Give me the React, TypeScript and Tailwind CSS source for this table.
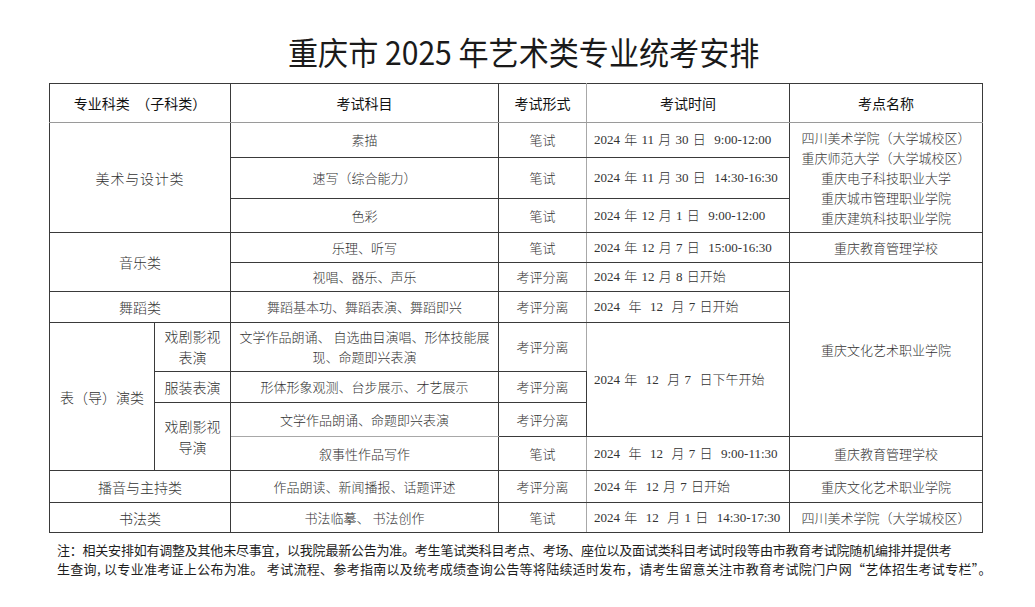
export default function App() {
  const td = "border border-[#3a3a3a] p-0 text-center align-middle leading-[20px] font-light";
  const tdD = "border border-[#3a3a3a] border-r-[#a8a8a8] p-0 text-center align-middle leading-[20px] font-light";
  const tdE =
    "border border-[#3a3a3a] pl-[7px] text-left align-middle whitespace-pre text-[13px] font-light [word-spacing:1px] font-['Liberation_Serif','Noto_Sans_CJK_SC',serif]";
  const th =
    "border border-[#3a3a3a] border-b-[#9a9a9a] p-0 text-center align-middle text-[14px] font-normal text-[#111]";
  const thD =
    "border border-[#3a3a3a] border-b-[#9a9a9a] border-r-[#a8a8a8] p-0 text-center align-middle text-[14px] font-normal text-[#111]";
  const cat = "text-[14px]";

  return (
    <div className="w-[1035px] h-[607px] bg-white font-['Noto_Sans_CJK_SC',sans-serif] text-[#333] pt-[30px]">
      <div className="flex justify-center pl-[13px] h-[42px]">
        <div className="text-[32px] leading-[42px] font-normal text-[#1a1a1a] scale-x-[0.94] whitespace-nowrap">
          重庆市 2025 年艺术类专业统考安排
        </div>
      </div>

      <table className="table-fixed border-collapse w-[933px] ml-[49px] mt-[11px] text-[13px]">
        <colgroup>
          <col className="w-[105px]" />
          <col className="w-[76px]" />
          <col className="w-[268px]" />
          <col className="w-[88px]" />
          <col className="w-[203px]" />
          <col className="w-[193px]" />
        </colgroup>
        <tbody>
          <tr className="h-[39px]">
            <th colSpan={2} className={`${th} whitespace-pre`}>
              {"专业科类  （子科类）"}
            </th>
            <th className={th}>考试科目</th>
            <th className={thD}>考试形式</th>
            <th className={th}>考试时间</th>
            <th className={th}>考点名称</th>
          </tr>

          <tr className="h-[35px]">
            <td colSpan={2} rowSpan={3} className={`${td} ${cat} tracking-[0.8px]`}>
              美术与设计类
            </td>
            <td className={td}>素描</td>
            <td className={tdD}>笔试</td>
            <td className={tdE}>{"2024 年 11 月 30 日  9:00-12:00"}</td>
            <td rowSpan={3} className={`${td} leading-[20.5px]`}>
              四川美术学院（大学城校区）
              <br />
              重庆师范大学（大学城校区）
              <br />
              重庆电子科技职业大学
              <br />
              重庆城市管理职业学院
              <br />
              重庆建筑科技职业学院
            </td>
          </tr>
          <tr className="h-[41px]">
            <td className={td}>速写（综合能力）</td>
            <td className={tdD}>笔试</td>
            <td className={tdE}>{"2024 年 11 月 30 日  14:30-16:30"}</td>
          </tr>
          <tr className="h-[34px]">
            <td className={td}>色彩</td>
            <td className={tdD}>笔试</td>
            <td className={tdE}>{"2024 年 12 月 1 日  9:00-12:00"}</td>
          </tr>

          <tr className="h-[30px]">
            <td colSpan={2} rowSpan={2} className={`${td} ${cat}`}>
              音乐类
            </td>
            <td className={td}>乐理、听写</td>
            <td className={tdD}>笔试</td>
            <td className={tdE}>{"2024 年 12 月 7 日  15:00-16:30"}</td>
            <td className={td}>重庆教育管理学校</td>
          </tr>
          <tr className="h-[29px]">
            <td className={td}>视唱、器乐、声乐</td>
            <td className={tdD}>考评分离</td>
            <td className={tdE}>{"2024 年 12 月 8 日开始"}</td>
            <td rowSpan={5} className={td}>
              重庆文化艺术职业学院
            </td>
          </tr>

          <tr className="h-[31px]">
            <td colSpan={2} className={`${td} ${cat}`}>
              舞蹈类
            </td>
            <td className={td}>舞蹈基本功、舞蹈表演、舞蹈即兴</td>
            <td className={tdD}>考评分离</td>
            <td className={tdE}>{"2024  年  12  月 7 日开始"}</td>
          </tr>

          <tr className="h-[49px]">
            <td rowSpan={4} className={`${td} ${cat}`}>
              表（导）演类
            </td>
            <td className={`${td} ${cat} leading-[21px]`}>
              戏剧影视
              <br />
              表演
            </td>
            <td className={td}>
              文学作品朗诵、 自选曲目演唱、形体技能展
              <br />
              现、命题即兴表演
            </td>
            <td className={tdD}>考评分离</td>
            <td rowSpan={3} className={tdE}>
              {"2024 年  12  月 7  日下午开始"}
            </td>
          </tr>
          <tr className="h-[31px]">
            <td className={`${td} ${cat}`}>服装表演</td>
            <td className={td}>形体形象观测、台步展示、才艺展示</td>
            <td className={tdD}>考评分离</td>
          </tr>
          <tr className="h-[34px]">
            <td rowSpan={2} className={`${td} ${cat} leading-[21px]`}>
              戏剧影视
              <br />
              导演
            </td>
            <td className={`${td} border-b-[#a8a8a8]`}>文学作品朗诵、命题即兴表演</td>
            <td className={tdD}>考评分离</td>
          </tr>
          <tr className="h-[34px]">
            <td className={td}>叙事性作品写作</td>
            <td className={tdD}>笔试</td>
            <td className={tdE}>{"2024  年  12  月 7 日  9:00-11:30"}</td>
            <td className={td}>重庆教育管理学校</td>
          </tr>

          <tr className="h-[32px]">
            <td colSpan={2} className={`${td} ${cat}`}>
              播音与主持类
            </td>
            <td className={td}>作品朗读、新闻播报、话题评述</td>
            <td className={tdD}>考评分离</td>
            <td className={tdE}>{"2024 年  12 月 7 日开始"}</td>
            <td className={td}>重庆文化艺术职业学院</td>
          </tr>

          <tr className="h-[30px]">
            <td colSpan={2} className={`${td} ${cat}`}>
              书法类
            </td>
            <td className={td}>书法临摹、 书法创作</td>
            <td className={tdD}>笔试</td>
            <td className={tdE}>{"2024 年  12  月 1 日  14:30-17:30"}</td>
            <td className={td}>四川美术学院（大学城校区）</td>
          </tr>
        </tbody>
      </table>

      <div className="ml-[57px] mt-[7px] text-[13px] leading-[19px] text-[#1e1e1e]">
        <div className="whitespace-nowrap tracking-[-0.22px]">
          注：相关安排如有调整及其他未尽事宜，以我院最新公告为准。考生笔试类科目考点、考场、座位以及面试类科目考试时段等由市教育考试院随机编排并提供考
        </div>
        <div className="whitespace-nowrap tracking-[0.3px]">
          生查询, 以专业准考证上公布为准。 考试流程、参考指南以及统考成绩查询公告等将陆续适时发布，请考生留意关注市教育考试院门户网“艺体招生考试专栏”。
        </div>
      </div>
    </div>
  );
}
